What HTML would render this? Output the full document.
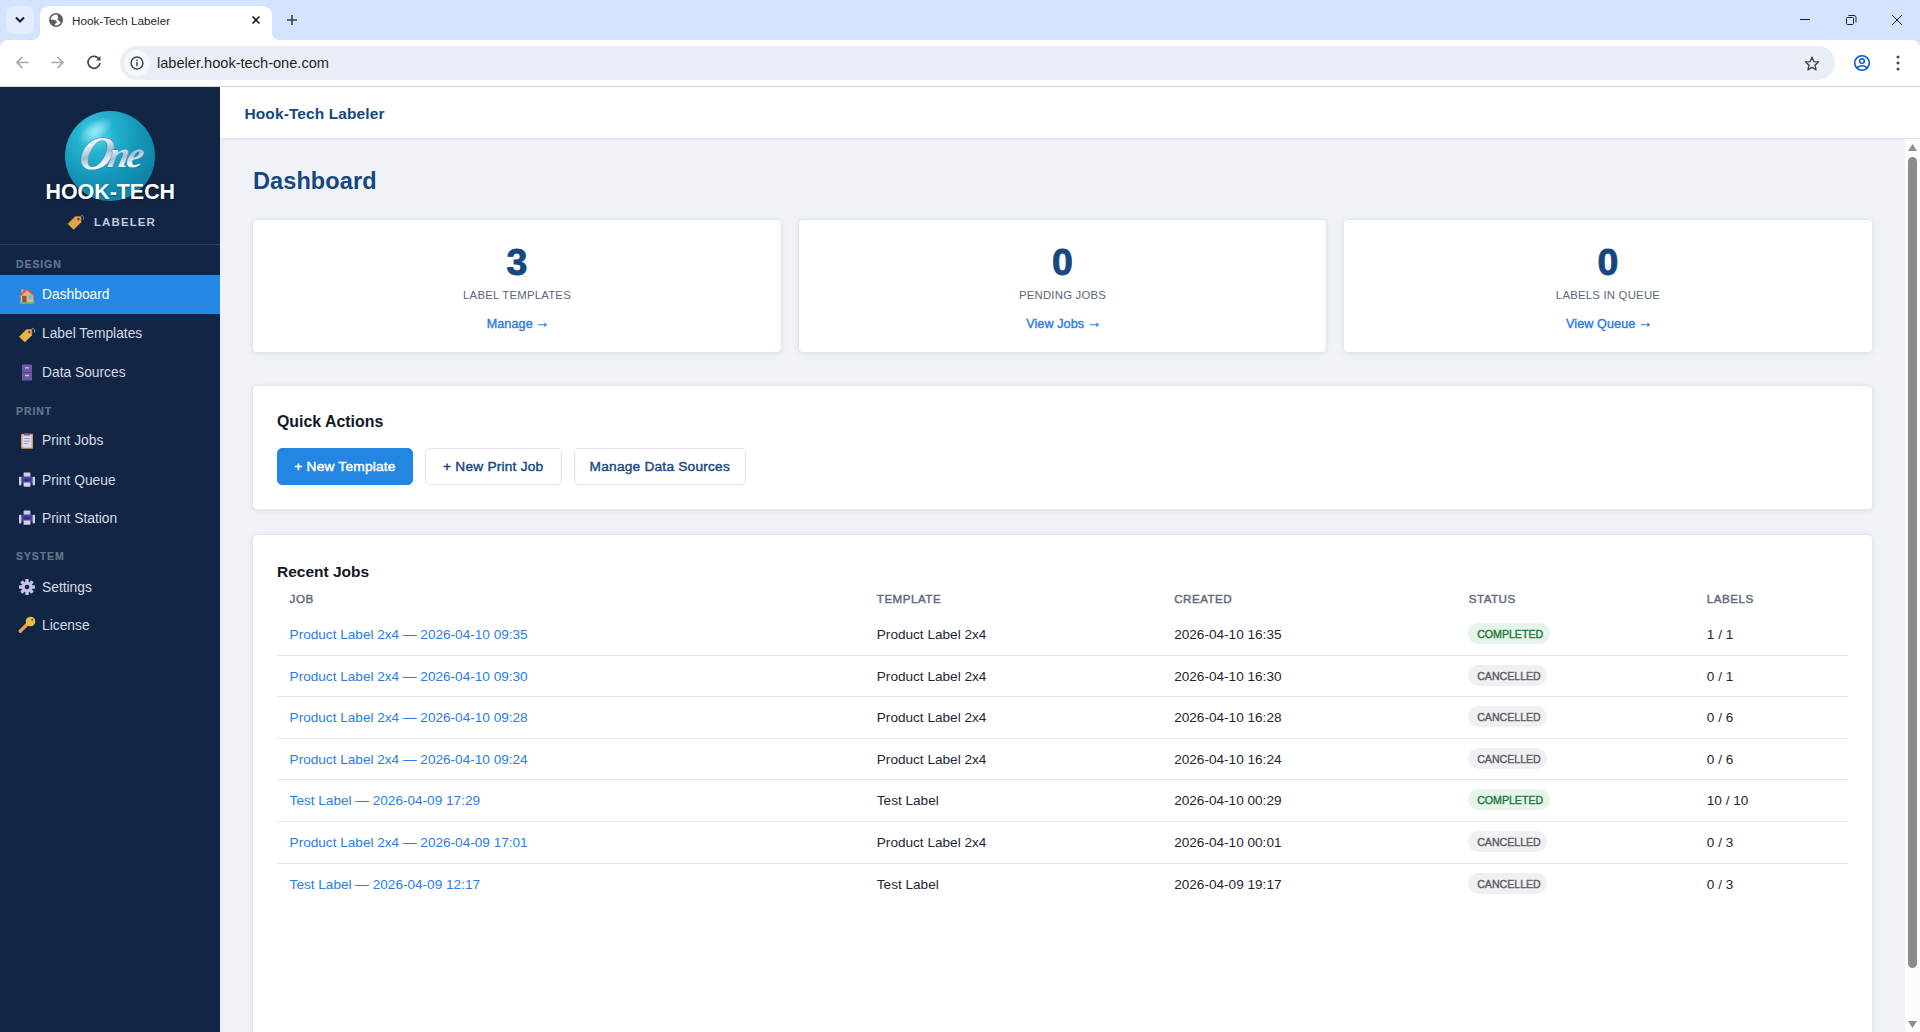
<!DOCTYPE html>
<html><head><meta charset="utf-8">
<style>
*{box-sizing:border-box;margin:0;padding:0}
html,body{width:1920px;height:1032px;overflow:hidden;font-family:"Liberation Sans",sans-serif;background:#fff}
.t{position:absolute;line-height:1;white-space:nowrap}
svg{position:absolute;overflow:visible}
#tabbar{position:absolute;left:0;top:0;width:1920px;height:48px;background:#d3e3fd}
#toolbar{position:absolute;left:0;top:40px;width:1920px;height:47px;background:#fff;border-bottom:1px solid #d3d7de;border-radius:8px 8px 0 0}
#omni{position:absolute;left:120px;top:6px;width:1715px;height:34px;border-radius:17px;background:#e9eef6}
#sidebar{position:absolute;left:0;top:87px;width:220px;height:945px;background:#122545}
#header{position:absolute;left:220px;top:87px;width:1700px;height:52px;background:#fff;border-bottom:1px solid #dfe3ea;box-shadow:0 1px 3px rgba(30,60,120,0.06);z-index:2}
#content{position:absolute;left:220px;top:139px;width:1685px;height:893px;background:#eff3f8}
#scroll{position:absolute;left:1905px;top:139px;width:15px;height:893px;background:#fcfcfc;z-index:3}
.card{position:absolute;background:#fff;border:1px solid #e2e6ee;border-radius:5px;box-shadow:0 1px 5px rgba(20,30,60,0.08)}
.nav{color:#d5dbe6;font-size:13.8px}
.sec{color:#66758b;font-size:10.5px;font-weight:bold;letter-spacing:0.9px;-webkit-text-stroke:0.2px currentColor}
.lbl{color:#5b6678;font-size:11.4px;letter-spacing:0.2px}
.lnk{color:#2b7de6;font-size:12.6px;font-weight:normal;-webkit-text-stroke:0.4px currentColor;letter-spacing:0.1px}
.num{color:#16477f;font-size:37.5px;font-weight:bold;-webkit-text-stroke:0.9px currentColor}
.th{color:#5f6b7e;font-size:11.6px;font-weight:normal;-webkit-text-stroke:0.45px currentColor;letter-spacing:0.5px}
.td{color:#1f2633;font-size:13.6px}
.tdl{color:#2b7de6;font-size:13.6px}
.rowb{position:absolute;left:57px;width:1571px;height:1px;background:#e2e6ef}
.badge{position:absolute;height:21px;border-radius:11px;font-weight:normal;-webkit-text-stroke:0.4px currentColor;font-size:10.6px;letter-spacing:0px;line-height:22.5px;padding-left:9px;white-space:nowrap}
.bc{background:#e6f4e9;color:#217a3a;width:82px}
.bx{background:#f0f0f2;color:#5a5e68;width:79px}
.btn{position:absolute;top:309px;height:37px;border-radius:5px;font-weight:normal;-webkit-text-stroke:0.45px currentColor;font-size:13.7px;letter-spacing:0.22px;line-height:36px;text-align:center;white-space:nowrap}
.btn.p{background:#2386e2;color:#fff;border:1px solid #2386e2}
.btn.s{background:#fff;color:#1b4a80;border:1px solid #dfe3ee}
</style></head><body>
<!-- ========== CHROME TAB BAR ========== -->
<div id="tabbar">
  <div style="position:absolute;left:6px;top:6px;width:28px;height:28px;border-radius:8px;background:#e3ecfc"></div>
  <svg style="left:0;top:0" width="40" height="40"><path d="M16 17.5 L20 21.5 L24 17.5" fill="none" stroke="#1f1f1f" stroke-width="2"/></svg>
  <!-- tab -->
  <svg style="left:32px;top:6px" width="250" height="34"><path d="M0 34 Q8 34 8 26 L8 10 Q8 0 18 0 L230 0 Q240 0 240 10 L240 26 Q240 34 248 34 Z" fill="#fff"/></svg>
  <svg style="left:49px;top:12.6px" width="14" height="14" viewBox="0 0 14 14"><circle cx="7" cy="7" r="6.2" fill="#fff" stroke="#5b5e63" stroke-width="1.5"/><path d="M8.2 1.1 Q11.8 1.8 13.2 4.6 L13.5 8.6 Q12 9.9 10.6 8.9 Q10.1 7.3 8.7 6.7 Q8 5.3 9.3 4.6 Q8.7 3 8.2 1.1 Z" fill="#5b5e63"/><path d="M0.8 6.8 Q3 6.3 5.6 6.9 Q7.8 7.4 8 9 Q7.3 10.3 6.6 10.2 Q6.2 11.8 4.8 12.6 Q1.8 11.2 0.9 8.6 Z" fill="#5b5e63"/></svg>
  <div class="t" style="left:72px;top:14.6px;font-size:11.7px;color:#1f1f1f">Hook-Tech Labeler</div>
  <svg style="left:0;top:0" width="320" height="40"><path d="M252.5 16.5 L259.5 23.5 M259.5 16.5 L252.5 23.5" stroke="#1f1f1f" stroke-width="1.6"/><path d="M292 15 L292 25 M287 20 L297 20" stroke="#3c4043" stroke-width="1.6"/></svg>
  <!-- window controls -->
  <svg style="left:1780px;top:0" width="140" height="40"><path d="M20 19.5 L30 19.5" stroke="#1f1f1f" stroke-width="1"/><rect x="66.5" y="17.5" width="7" height="7" rx="1" fill="none" stroke="#1f1f1f" stroke-width="1"/><path d="M68.5 15.5 L74 15.5 Q76 15.5 76 17.5 L76 22.5" fill="none" stroke="#1f1f1f" stroke-width="1"/><path d="M112 15 L122 25 M122 15 L112 25" stroke="#1f1f1f" stroke-width="1"/></svg>
</div>
<!-- ========== CHROME TOOLBAR ========== -->
<div id="toolbar">
  <svg style="left:0;top:0" width="110" height="46"><g fill="none" stroke-width="1.6" stroke-linecap="square"><path d="M28 22.5 L17 22.5 M22 17.5 L17 22.5 L22 27.5" stroke="#a6a9ad"/><path d="M52 22.5 L63 22.5 M58 17.5 L63 22.5 L58 27.5" stroke="#a6a9ad"/></g><path d="M99.2 19.2 A6 6 0 1 0 100 23" fill="none" stroke="#474747" stroke-width="1.7"/><path d="M100.5 16 L100.5 20.6 L96 20.6 Z" fill="#474747"/></svg>
  <div id="omni">
    <div style="position:absolute;left:4px;top:4px;width:26px;height:26px;border-radius:13px;background:#f5f7fc"></div>
    <svg style="left:10px;top:10px" width="14" height="14" viewBox="0 0 14 14"><circle cx="7" cy="7" r="5.9" fill="none" stroke="#474747" stroke-width="1.5"/><rect x="6.25" y="6" width="1.5" height="4.2" fill="#474747"/><rect x="6.25" y="3.6" width="1.5" height="1.5" fill="#474747"/></svg>
    <div class="t" style="left:37px;top:10px;font-size:14.6px;color:#1f1f1f">labeler.hook-tech-one.com</div>
    <svg style="left:1684px;top:10px" width="16" height="16" viewBox="0 0 16 16"><path d="M8 1.2 L9.9 5.6 L14.6 6 L11 9.1 L12.1 13.8 L8 11.3 L3.9 13.8 L5 9.1 L1.4 6 L6.1 5.6 Z" fill="none" stroke="#474747" stroke-width="1.4" stroke-linejoin="round"/></svg>
  </div>
  <svg style="left:1853px;top:14px" width="18" height="18" viewBox="0 0 18 18"><circle cx="9" cy="9" r="7.3" fill="none" stroke="#0b57d0" stroke-width="1.6"/><circle cx="9" cy="7" r="2.3" fill="none" stroke="#0b57d0" stroke-width="1.5"/><path d="M3.8 13.8 Q9 9.6 14.2 13.8" fill="none" stroke="#0b57d0" stroke-width="1.5"/></svg>
  <svg style="left:1890px;top:14px" width="16" height="18"><circle cx="8" cy="3" r="1.5" fill="#474747"/><circle cx="8" cy="9" r="1.5" fill="#474747"/><circle cx="8" cy="15" r="1.5" fill="#474747"/></svg>
</div>
<!-- ========== SIDEBAR ========== -->
<div id="sidebar">
  <!-- logo -->
  <div style="position:absolute;left:65px;top:24px;width:90px;height:90px;border-radius:50%;background:radial-gradient(circle at 34% 26%,#6adbeb 0%,#26b4d2 20%,#1396b8 50%,#0e84a7 75%,#17a5c6 90%,#0a6c8e 100%)"></div>
  <div style="position:absolute;left:76px;top:34px;width:40px;height:18px;border-radius:50%;background:radial-gradient(ellipse at center,rgba(200,250,255,0.55),rgba(255,255,255,0) 70%);transform:rotate(-32deg)"></div>
  <svg style="left:60px;top:40px" width="100" height="56" viewBox="0 0 100 56"><defs><linearGradient id="silv" x1="0" y1="0" x2="0.25" y2="1"><stop offset="0" stop-color="#ffffff"/><stop offset="0.38" stop-color="#e8f2f7"/><stop offset="0.6" stop-color="#9fbfd0"/><stop offset="0.8" stop-color="#e9f4fa"/><stop offset="1" stop-color="#ffffff"/></linearGradient></defs><g transform="skewX(-12)" font-family="Liberation Serif" font-style="italic" font-weight="bold" fill="url(#silv)" stroke="#3f78a6" stroke-width="0.9" paint-order="stroke"><text x="26" y="42" font-size="47">O</text><text x="55" y="40.5" font-size="37" letter-spacing="-2">ne</text></g></svg>
  <div class="t" style="left:45.5px;top:94.6px;font-size:21.4px;font-weight:bold;color:#fff;text-shadow:0 1px 2px rgba(0,0,0,0.35)">HOOK-TECH</div>
  <svg style="left:67.5px;top:126.5px" width="16" height="15" viewBox="0 0 16 15"><g transform="rotate(-45 8 7.5)"><path d="M0.6 3.4 L11 3.4 L15.2 7.5 L11 11.6 L0.6 11.6 Z" fill="#d9a641" stroke="#b98a2c" stroke-width="0.5"/><circle cx="11.4" cy="7.5" r="1.3" fill="#7d3460"/></g><path d="M13.2 1 Q16.4 2 15.4 5.4" fill="none" stroke="#9aa3b8" stroke-width="0.8"/></svg>
  <div class="t" style="left:94px;top:130.2px;font-size:11.5px;font-weight:bold;color:#c3cbdc;letter-spacing:1.1px">LABELER</div>
  <div style="position:absolute;left:0;top:157px;width:220px;height:1px;background:#2a4163"></div>
  <!-- nav -->
  <div class="t sec" style="left:16px;top:172.1px">DESIGN</div>
  <div style="position:absolute;left:0;top:188px;width:220px;height:39px;background:#2387e3"></div>
  <svg style="left:19px;top:201px" width="16" height="16" viewBox="0 0 16 16"><rect x="2.5" y="1" width="2" height="4" fill="#e9a070"/><path d="M0 8 L8 0.6 L16 8 L14.6 8.8 L8 2.8 L1.4 8.8 Z" fill="#ef5a2e"/><path d="M1.6 8.2 L8 2.6 L14.4 8.2 L14.4 14.6 L1.6 14.6 Z" fill="#efb27a"/><rect x="3.2" y="7.8" width="4.4" height="6.8" fill="#8a5a45"/><rect x="9.4" y="7.6" width="3.8" height="3.6" fill="#55c3f0"/><rect x="1" y="14.4" width="14" height="1.4" fill="#4ccf6a"/></svg>
  <div class="t nav" style="left:42px;top:201.2px;color:#fff">Dashboard</div>
  <svg style="left:19px;top:240px" width="16" height="15" viewBox="0 0 16 15"><g transform="rotate(-45 8 7.5)"><path d="M1 3.6 L11 3.6 L15 7.5 L11 11.4 L1 11.4 Z" fill="#e3b548" stroke="#c99530" stroke-width="0.5"/><circle cx="11.4" cy="7.5" r="1.3" fill="#8d2f8a"/></g><path d="M13.2 1.2 Q16.6 2.2 15.4 5.6" fill="none" stroke="#b9c0d0" stroke-width="0.9"/></svg>
  <div class="t nav" style="left:42px;top:240.3px">Label Templates</div>
  <svg style="left:22px;top:277px" width="10" height="17" viewBox="0 0 10 17"><rect x="0" y="0.5" width="10" height="16" rx="0.6" fill="#6a5aa6"/><rect x="0.6" y="8" width="8.8" height="0.8" fill="#4f4287"/><rect x="3" y="3.2" width="4" height="1.4" rx="0.5" fill="#c8c0ec"/><rect x="3" y="10.8" width="4" height="1.4" rx="0.5" fill="#c8c0ec"/></svg>
  <div class="t nav" style="left:42px;top:278.5px">Data Sources</div>
  <div class="t sec" style="left:16px;top:318.5px">PRINT</div>
  <svg style="left:21px;top:346px" width="12" height="16" viewBox="0 0 12 16"><rect x="0" y="0.8" width="12" height="15" rx="0.8" fill="#dc9a5c"/><rect x="1.4" y="2.2" width="9.2" height="12.4" fill="#dcdcf0"/><rect x="3" y="0" width="6" height="2.6" rx="0.8" fill="#6a5a9a"/><rect x="2.8" y="5" width="6.4" height="0.9" fill="#9a98b8"/><rect x="2.8" y="7.6" width="6.4" height="0.9" fill="#9a98b8"/><rect x="2.8" y="10.2" width="4.4" height="0.9" fill="#9a98b8"/></svg>
  <div class="t nav" style="left:42px;top:347.4px">Print Jobs</div>
  <svg style="left:19px;top:385px" width="16" height="15" viewBox="0 0 16 15"><rect x="4.6" y="0.5" width="6.8" height="4.6" rx="0.6" fill="#cfcbe6"/><rect x="2.4" y="4.5" width="11.2" height="7" rx="1" fill="#4d4299"/><rect x="0" y="4.8" width="2.4" height="8.6" rx="0.8" fill="#d2d0ea"/><rect x="13.6" y="4.8" width="2.4" height="8.6" rx="0.8" fill="#d2d0ea"/><rect x="4.6" y="10.5" width="6.8" height="4.2" fill="#d6d2ec"/><rect x="5.4" y="7.2" width="5.2" height="1.6" fill="#2d2866"/></svg>
  <div class="t nav" style="left:42px;top:386.5px">Print Queue</div>
  <svg style="left:19px;top:423px" width="16" height="15" viewBox="0 0 16 15"><rect x="4.6" y="0.5" width="6.8" height="4.6" rx="0.6" fill="#cfcbe6"/><rect x="2.4" y="4.5" width="11.2" height="7" rx="1" fill="#4d4299"/><rect x="0" y="4.8" width="2.4" height="8.6" rx="0.8" fill="#d2d0ea"/><rect x="13.6" y="4.8" width="2.4" height="8.6" rx="0.8" fill="#d2d0ea"/><rect x="4.6" y="10.5" width="6.8" height="4.2" fill="#d6d2ec"/><rect x="5.4" y="7.2" width="5.2" height="1.6" fill="#2d2866"/></svg>
  <div class="t nav" style="left:42px;top:424.9px">Print Station</div>
  <div class="t sec" style="left:16px;top:463.9px">SYSTEM</div>
  <svg style="left:19px;top:492px" width="16" height="16" viewBox="0 0 16 16"><g fill="#c8c2e4"><circle cx="8" cy="8" r="5.4"/><g id="teeth"><rect x="6.3" y="0" width="3.4" height="3.4" rx="0.8"/><rect x="6.3" y="12.6" width="3.4" height="3.4" rx="0.8"/><rect x="0" y="6.3" width="3.4" height="3.4" rx="0.8"/><rect x="12.6" y="6.3" width="3.4" height="3.4" rx="0.8"/></g><g transform="rotate(45 8 8)"><rect x="6.3" y="0" width="3.4" height="3.4" rx="0.8"/><rect x="6.3" y="12.6" width="3.4" height="3.4" rx="0.8"/><rect x="0" y="6.3" width="3.4" height="3.4" rx="0.8"/><rect x="12.6" y="6.3" width="3.4" height="3.4" rx="0.8"/></g></g><circle cx="8" cy="8" r="2.3" fill="#122545"/></svg>
  <div class="t nav" style="left:42px;top:493.5px">Settings</div>
  <svg style="left:18px;top:529px" width="18" height="18" viewBox="0 0 18 18"><path d="M2.2 15.2 L9.5 8" stroke="#eaa04a" stroke-width="3.4" stroke-linecap="round"/><circle cx="12.5" cy="5.5" r="4.8" fill="#e9bd4c"/><circle cx="14.2" cy="3.8" r="0.9" fill="#3a2a20"/></svg>
  <div class="t nav" style="left:42px;top:531.5px">License</div>
</div>
<!-- ========== HEADER ========== -->
<div id="header">
  <div class="t" style="left:24.5px;top:18.8px;font-size:15.5px;font-weight:bold;letter-spacing:0.1px;color:#16477f">Hook-Tech Labeler</div>
</div>
<!-- ========== CONTENT ========== -->
<div id="content">
  <div class="t" style="left:33px;top:30.8px;font-size:23.5px;letter-spacing:0.1px;font-weight:bold;color:#16477f">Dashboard</div>
  <div class="card" style="left:32px;top:80px;width:530px;height:134px"></div>
  <div class="t num" style="left:32px;width:530px;text-align:center;top:105.37px">3</div>
  <div class="t lbl" style="left:32px;width:530px;text-align:center;top:150.95px">LABEL TEMPLATES</div>
  <div class="t lnk" style="left:32px;width:530px;text-align:center;top:178.93px">Manage <svg style="position:static;display:inline-block;vertical-align:baseline;margin-left:1px" width="10" height="7" viewBox="0 0 10 7"><path d="M0.8 3.8 H9.3 M7.4 2.1 L9.3 3.8 L7.4 5.5" fill="none" stroke="#2b7de6" stroke-width="1.1"/></svg></div>
  <div class="card" style="left:578px;top:80px;width:529px;height:134px"></div>
  <div class="t num" style="left:578px;width:529px;text-align:center;top:105.37px">0</div>
  <div class="t lbl" style="left:578px;width:529px;text-align:center;top:150.95px">PENDING JOBS</div>
  <div class="t lnk" style="left:578px;width:529px;text-align:center;top:178.93px">View Jobs <svg style="position:static;display:inline-block;vertical-align:baseline;margin-left:1px" width="10" height="7" viewBox="0 0 10 7"><path d="M0.8 3.8 H9.3 M7.4 2.1 L9.3 3.8 L7.4 5.5" fill="none" stroke="#2b7de6" stroke-width="1.1"/></svg></div>
  <div class="card" style="left:1123px;top:80px;width:530px;height:134px"></div>
  <div class="t num" style="left:1123px;width:530px;text-align:center;top:105.37px">0</div>
  <div class="t lbl" style="left:1123px;width:530px;text-align:center;top:150.95px">LABELS IN QUEUE</div>
  <div class="t lnk" style="left:1123px;width:530px;text-align:center;top:178.93px">View Queue <svg style="position:static;display:inline-block;vertical-align:baseline;margin-left:1px" width="10" height="7" viewBox="0 0 10 7"><path d="M0.8 3.8 H9.3 M7.4 2.1 L9.3 3.8 L7.4 5.5" fill="none" stroke="#2b7de6" stroke-width="1.1"/></svg></div>
  <div class="card" style="left:32px;top:246px;width:1621px;height:125px"></div>
  <div class="t" style="left:57px;top:275.44px;font-size:15.9px;font-weight:bold;color:#111827">Quick Actions</div>
  <div class="btn p" style="left:57px;width:136px">+ New Template</div>
  <div class="btn s" style="left:205px;width:136.5px">+ New Print Job</div>
  <div class="btn s" style="left:354px;width:171.6px">Manage Data Sources</div>
  <div class="card" style="left:32px;top:395px;width:1621px;height:540px"></div>
  <div class="t" style="left:57px;top:424.68px;font-size:15.5px;font-weight:bold;color:#111827">Recent Jobs</div>
  <div class="t th" style="left:69.6px;top:454.18px">JOB</div>
  <div class="t th" style="left:656.8px;top:454.18px">TEMPLATE</div>
  <div class="t th" style="left:954.2px;top:454.18px">CREATED</div>
  <div class="t th" style="left:1248.7px;top:454.18px">STATUS</div>
  <div class="t th" style="left:1486.8px;top:454.18px">LABELS</div>
  <div class="t tdl" style="left:69.6px;top:488.88px">Product Label 2x4 — 2026-04-10 09:35</div>
  <div class="t td" style="left:656.8px;top:488.88px">Product Label 2x4</div>
  <div class="t td" style="left:954.2px;top:488.88px">2026-04-10 16:35</div>
  <div class="badge bc" style="left:1248.2px;top:484.00px">COMPLETED</div>
  <div class="t td" style="left:1486.8px;top:488.88px">1 / 1</div>
  <div class="rowb" style="top:515.50px"></div>
  <div class="t tdl" style="left:69.6px;top:530.50px">Product Label 2x4 — 2026-04-10 09:30</div>
  <div class="t td" style="left:656.8px;top:530.50px">Product Label 2x4</div>
  <div class="t td" style="left:954.2px;top:530.50px">2026-04-10 16:30</div>
  <div class="badge bx" style="left:1248.2px;top:525.62px">CANCELLED</div>
  <div class="t td" style="left:1486.8px;top:530.50px">0 / 1</div>
  <div class="rowb" style="top:557.12px"></div>
  <div class="t tdl" style="left:69.6px;top:572.12px">Product Label 2x4 — 2026-04-10 09:28</div>
  <div class="t td" style="left:656.8px;top:572.12px">Product Label 2x4</div>
  <div class="t td" style="left:954.2px;top:572.12px">2026-04-10 16:28</div>
  <div class="badge bx" style="left:1248.2px;top:567.24px">CANCELLED</div>
  <div class="t td" style="left:1486.8px;top:572.12px">0 / 6</div>
  <div class="rowb" style="top:598.74px"></div>
  <div class="t tdl" style="left:69.6px;top:613.74px">Product Label 2x4 — 2026-04-10 09:24</div>
  <div class="t td" style="left:656.8px;top:613.74px">Product Label 2x4</div>
  <div class="t td" style="left:954.2px;top:613.74px">2026-04-10 16:24</div>
  <div class="badge bx" style="left:1248.2px;top:608.86px">CANCELLED</div>
  <div class="t td" style="left:1486.8px;top:613.74px">0 / 6</div>
  <div class="rowb" style="top:640.36px"></div>
  <div class="t tdl" style="left:69.6px;top:655.36px">Test Label — 2026-04-09 17:29</div>
  <div class="t td" style="left:656.8px;top:655.36px">Test Label</div>
  <div class="t td" style="left:954.2px;top:655.36px">2026-04-10 00:29</div>
  <div class="badge bc" style="left:1248.2px;top:650.48px">COMPLETED</div>
  <div class="t td" style="left:1486.8px;top:655.36px">10 / 10</div>
  <div class="rowb" style="top:681.98px"></div>
  <div class="t tdl" style="left:69.6px;top:696.98px">Product Label 2x4 — 2026-04-09 17:01</div>
  <div class="t td" style="left:656.8px;top:696.98px">Product Label 2x4</div>
  <div class="t td" style="left:954.2px;top:696.98px">2026-04-10 00:01</div>
  <div class="badge bx" style="left:1248.2px;top:692.10px">CANCELLED</div>
  <div class="t td" style="left:1486.8px;top:696.98px">0 / 3</div>
  <div class="rowb" style="top:723.60px"></div>
  <div class="t tdl" style="left:69.6px;top:738.60px">Test Label — 2026-04-09 12:17</div>
  <div class="t td" style="left:656.8px;top:738.60px">Test Label</div>
  <div class="t td" style="left:954.2px;top:738.60px">2026-04-09 19:17</div>
  <div class="badge bx" style="left:1248.2px;top:733.72px">CANCELLED</div>
  <div class="t td" style="left:1486.8px;top:738.60px">0 / 3</div>
</div>
<div id="scroll">
  <svg style="left:0;top:0" width="15" height="893"><path d="M3 12 L7.5 5 L12 12 Z" fill="#8c8c8c"/><rect x="3" y="18" width="9" height="811" rx="4.5" fill="#8c8c8c"/><path d="M3 882 L7.5 889 L12 882 Z" fill="#8c8c8c"/></svg>
</div>
</body></html>
